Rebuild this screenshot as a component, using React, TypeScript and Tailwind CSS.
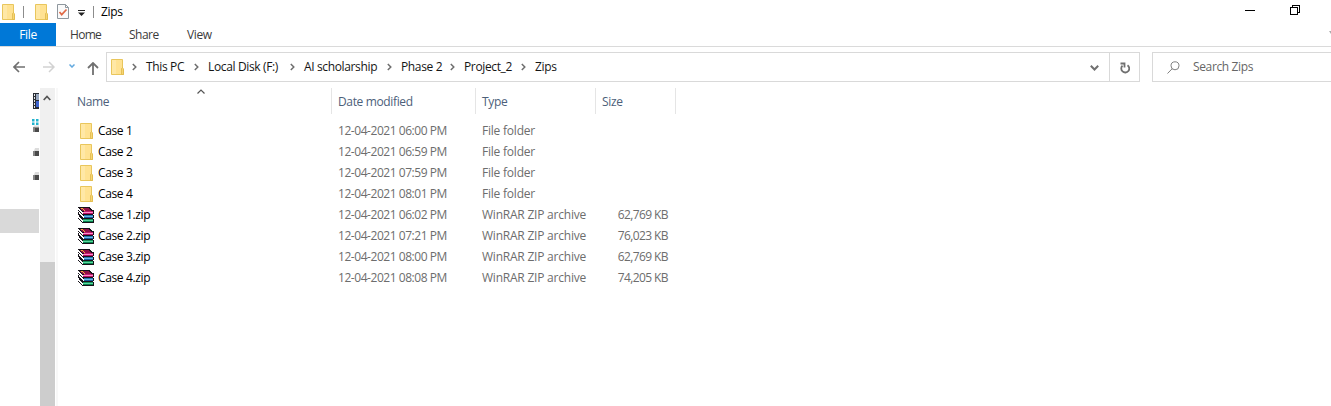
import type { ReactNode } from "react";

function Folder({ className = "" }: { className?: string }) {
  return (
    <svg width="13" height="16" viewBox="0 0 13 16" className={`shrink-0 ${className}`}>
      <path d="M.5.5h11v9l1 1v5H.5z" fill="#ffe292" stroke="#e9c65c" />
      <path d="M1 1h4v14H1z" fill="#ffe8a6" />
      <path d="M10.5 15V9.5l1-1 1 1.5v5.5h-2z" fill="#f7d673" stroke="#dfb94b" strokeWidth=".8" />
    </svg>
  );
}

function Books() {
  return (
    <svg width="16" height="16" viewBox="0 0 16 16" className="shrink-0" shapeRendering="crispEdges">
      <path d="M0 0h11l4 3h1v4h-1v1h1v3h-1v1h1v4H5l-5-4V9h1V8H0V5h1V4H0z" fill="#17131a" />
      <path d="M1 1h9l4 3H5z" fill="#8f1048" />
      <path d="M3 1h2v1h1v1h1v1H6V3H5V2H3z" fill="#eeb738" />
      <path d="M6 4h9v1H6z" fill="#c31a70" />
      <path d="M5 5h10v1H5z" fill="#ff8bc6" />
      <path d="M5 6h10v1H5z" fill="#b80f66" />
      <path d="M6 8h9v1H6z" fill="#2a76b4" />
      <path d="M6 9h9v1H6z" fill="#65b8e8" />
      <path d="M6 10h9v1H6z" fill="#175a9c" />
      <path d="M5 12h10v1H5z" fill="#14935a" />
      <path d="M5 13h10v1H5z" fill="#59d79e" />
      <path d="M5 14h10v1H5z" fill="#07814c" />
      <path d="M0 1h1v1h1v1h1v1h1v1h1v2H4V6H3V5H2V4H1V3H0z" fill="#fff" />
      <path d="M1 5h1v1h1v1h1v1h1v1h1v2H5v-1H4V9H3V8H2V7H1z" fill="#fff" />
      <path d="M0 9h1v1h1v1h1v1h1v1h1v2H4v-1H3v-1H2v-1H1v-1H0z" fill="#fff" />
    </svg>
  );
}

function Crumb({ width, children }: { width: string; children: ReactNode }) {
  return (
    <div className={`flex shrink-0 items-center ${width}`}>
      <svg width="5" height="8" viewBox="0 0 5 8" fill="none" stroke="#6e6e6e" strokeWidth="1.5" className="mr-[9px] shrink-0">
        <path d="M.8 1l3 3-3 3" />
      </svg>
      <span>{children}</span>
    </div>
  );
}

function Drive() {
  return (
    <svg width="6" height="8" viewBox="0 0 6 8" className="block">
      <path d="M2 0h4v3H1z" fill="#dcdcdc" />
      <path d="M0 3h6v5H0z" fill="#4a4a4a" />
      <path d="M0 3h2v5H0z" fill="#858585" />
    </svg>
  );
}

const files = [
  ["Case 1", "12-04-2021 06:00 PM", "File folder", ""],
  ["Case 2", "12-04-2021 06:59 PM", "File folder", ""],
  ["Case 3", "12-04-2021 07:59 PM", "File folder", ""],
  ["Case 4", "12-04-2021 08:01 PM", "File folder", ""],
  ["Case 1.zip", "12-04-2021 06:02 PM", "WinRAR ZIP archive", "62,769 KB"],
  ["Case 2.zip", "12-04-2021 07:21 PM", "WinRAR ZIP archive", "76,023 KB"],
  ["Case 3.zip", "12-04-2021 08:00 PM", "WinRAR ZIP archive", "62,769 KB"],
  ["Case 4.zip", "12-04-2021 08:08 PM", "WinRAR ZIP archive", "74,205 KB"],
];

function TitleBar() {
  return (
    <div className="flex h-[23px] items-center">
      <Folder className="ml-0.5" />
      <i className="ml-2 h-3 w-px bg-[#8c8c8c]" />
      <Folder className="ml-[11px]" />
      <svg width="12" height="15" viewBox="0 0 12 15" className="ml-[9px]">
        <path d="M.5.5h8l3 3v11H.5z" fill="#fafafa" stroke="#8e979e" />
        <path d="M8.500.5v3h3" fill="none" stroke="#8e979e" />
        <path d="M2.500 8l2.200 2.600L9.500 5.500" fill="none" stroke="#e06a47" strokeWidth="1.700" />
      </svg>
      <svg width="7" height="6" viewBox="0 0 7 6" className="ml-[9px] mt-[3px]">
        <path d="M0 0h7v1H0zM0 2.500h7L3.500 6z" fill="#222" />
      </svg>
      <i className="ml-2 h-3 w-px bg-[#8c8c8c]" />
      <span className="ml-[7px] text-black">Zips</span>
      <svg width="11" height="11" viewBox="0 0 11 11" className="-mt-0.5 ml-auto mr-[34px]" shapeRendering="crispEdges">
        <path d="M0 5h10v1H0z" fill="#000" />
      </svg>
      <svg width="11" height="11" viewBox="0 0 11 11" className="mr-[30px] -mt-[3px]" fill="none" stroke="#000" shapeRendering="crispEdges">
        <path d="M.5 2.500h7v7h-7zM2.500 2.500v-2h7v7h-2" />
      </svg>
    </div>
  );
}

function Ribbon() {
  return (
    <div className="flex h-6 items-center border-b border-[#dadada] text-[#3b3b3b]">
      <div className="flex h-full w-14 items-center justify-center bg-[#0078d7] text-white">File</div>
      <span className="ml-[14px] w-[59px] tracking-[-0.7px]">Home</span>
      <span className="w-[58px] tracking-[-0.5px]">Share</span>
      <span>View</span>
      <svg width="2" height="3" viewBox="0 0 2 3" className="ml-auto mb-1">
        <path d="M0 0h2v3z" fill="#aaa" />
      </svg>
    </div>
  );
}

function AddressRow() {
  return (
    <div className="flex h-[41px] items-start pt-[5px]">
      <div className="flex h-[30px] w-[106px] shrink-0 items-center">
        <svg width="12" height="12" viewBox="0 0 12 12" className="ml-[13px]" fill="none" stroke="#707070" strokeWidth="1.700">
          <path d="M12 6H1M6 1L1 6l5 5" />
        </svg>
        <svg width="12" height="12" viewBox="0 0 12 12" className="ml-[18px]" fill="none" stroke="#d2d2d2" strokeWidth="1.500">
          <path d="M0 6h11M6 1l5 5-5 5" />
        </svg>
        <svg width="6" height="4" viewBox="0 0 6 4" className="ml-[14px] -mt-0.5" fill="none" stroke="#63a9df" strokeWidth="1.500">
          <path d="M.5.500L3 3 5.500.500" />
        </svg>
        <svg width="12" height="13" viewBox="0 0 12 13" className="ml-3 mt-0.5" fill="none" stroke="#707070" strokeWidth="1.800">
          <path d="M6 13V1M1 6l5-5 5 5" />
        </svg>
      </div>
      <div className="flex h-[30px] w-[1034px] shrink-0 items-center border border-[#d9d9d9] text-[#151515]">
        <Folder className="ml-1 mr-[8px]" />
        <Crumb width="w-[62px]">This PC</Crumb>
        <Crumb width="w-[96px]">Local Disk (F:)</Crumb>
        <Crumb width="w-[97px]">AI scholarship</Crumb>
        <Crumb width="w-[63px]">Phase 2</Crumb>
        <Crumb width="w-[71px]">Project_2</Crumb>
        <Crumb width="w-[60px]">Zips</Crumb>
        <svg width="9" height="6" viewBox="0 0 9 6" className="ml-auto mr-[10px] mt-0.5" fill="none" stroke="#707070" strokeWidth="2">
          <path d="M.8.800l3.700 3.700L8.200.800" />
        </svg>
        <div className="flex h-full w-[30px] items-center justify-center border-l border-[#d9d9d9]">
          <svg width="10" height="12" viewBox="0 0 10 12" className="mt-0.5" fill="none" stroke="#707070" strokeWidth="1.800">
            <path d="M7.500 3.200A4 4 0 1 1 2.500 3.600M.5 1.500h4v4" />
          </svg>
        </div>
      </div>
      <div className="ml-3 flex h-[30px] flex-1 items-center border border-r-0 border-[#d9d9d9] text-[#666]">
        <svg width="13" height="13" viewBox="0 0 13 13" className="ml-[14px] mr-[13px]" fill="none" stroke="#808080">
          <circle cx="8" cy="4.800" r="4" />
          <path d="M5.200 7.700L.5 12.500" />
        </svg>
        <span>Search Zips</span>
      </div>
    </div>
  );
}

function NavigationPane() {
  return (
    <div className="flex w-[58px] shrink-0 border-r-2 border-[#f8f8f8]">
      <div className="flex w-10 flex-col">
        <svg width="6" height="16" viewBox="0 0 6 16" className="ml-[33px] mt-[5px]">
          <path d="M0 0h6v16H0z" fill="#292d35" />
          <path d="M1 1h1v2H1zm0 3h1v2H1zm0 3h1v2H1zm0 3h1v2H1zm0 3h1v2H1z" fill="#e7e7e7" />
          <path d="M3 1h3v6H3z" fill="#9aa9c0" />
          <path d="M3 8h3v6H3z" fill="#3e64cf" />
        </svg>
        <svg width="8" height="13" viewBox="0 0 8 13" className="ml-[31px] mt-[10px]">
          <path d="M1 0h2.500v2.500H1zm4 0h2.500v2.500H5zM1 3.500h2.500V6H1zm4 0h2.500v2.500H5z" fill="#22b3ce" />
          <path d="M3 6.500h5V9H2z" fill="#dcdcdc" />
          <path d="M2 8.500h6V13H2z" fill="#4a4a4a" />
          <path d="M2 8.500h2V13H2z" fill="#858585" />
        </svg>
        <div className="ml-[33px] mt-4"><Drive /></div>
        <div className="ml-[33px] mt-4"><Drive /></div>
        <div className="mt-[29px] h-6 w-[39px] bg-[#d9d9d9]" />
      </div>
      <div className="flex w-[15px] flex-col bg-[#f0f0f0]">
        <svg width="8" height="6" viewBox="0 0 8 6" className="ml-[3px] mt-[7px]" fill="none" stroke="#555" strokeWidth="1.700">
          <path d="M.7 5L4 1.500 7.300 5" />
        </svg>
        <div className="mt-auto h-[144px] bg-[#cdcdcd]" />
      </div>
    </div>
  );
}

function FileList() {
  return (
    <div className="flex-1">
      <div className="relative flex h-[26px] items-center text-[#4c607a]">
        <svg width="8" height="5" viewBox="0 0 8 5" className="absolute left-[139px] top-px" fill="none" stroke="#555" strokeWidth="1.200">
          <path d="M.5 4.500L4 1l3.500 3.500" />
        </svg>
        <div className="flex h-full w-[274px] items-center border-r border-[#e5e5e5] pl-[19px] pt-0.5">Name</div>
        <div className="flex h-full w-[144px] items-center border-r border-[#e5e5e5] pl-1.5 pt-0.5">Date modified</div>
        <div className="flex h-full w-[120px] items-center border-r border-[#e5e5e5] pl-1.5 pt-0.5">Type</div>
        <div className="flex h-full w-20 items-center border-r border-[#e5e5e5] pl-1.5 pt-0.5">Size</div>
      </div>
      <div className="pt-1.5">
        {files.map(([name, date, type, size]) => (
          <div key={name} className="flex h-[21px] items-center text-[#6d6d6d]">
            <div className="flex w-[280px] items-center text-black">
              <div className="ml-5 flex w-5 items-center">
                {size ? <Books /> : <Folder className="ml-0.5" />}
              </div>
              <span>{name}</span>
            </div>
            <span className="w-[144px] tracking-[-0.45px]">{date}</span>
            <span className="w-[116px] tracking-[-0.22px]">{type}</span>
            <span className="w-[70px] text-right tracking-[-0.6px]">{size}</span>
          </div>
        ))}
      </div>
    </div>
  );
}

export default function App() {
  return (
    <div className="flex h-[406px] w-[1331px] flex-col overflow-hidden whitespace-nowrap bg-white font-['Open_Sans','Noto_Sans',sans-serif] text-[12px] leading-4 tracking-[-0.36px]">
      <TitleBar />
      <Ribbon />
      <AddressRow />
      <div className="flex flex-1">
        <NavigationPane />
        <FileList />
      </div>
    </div>
  );
}
